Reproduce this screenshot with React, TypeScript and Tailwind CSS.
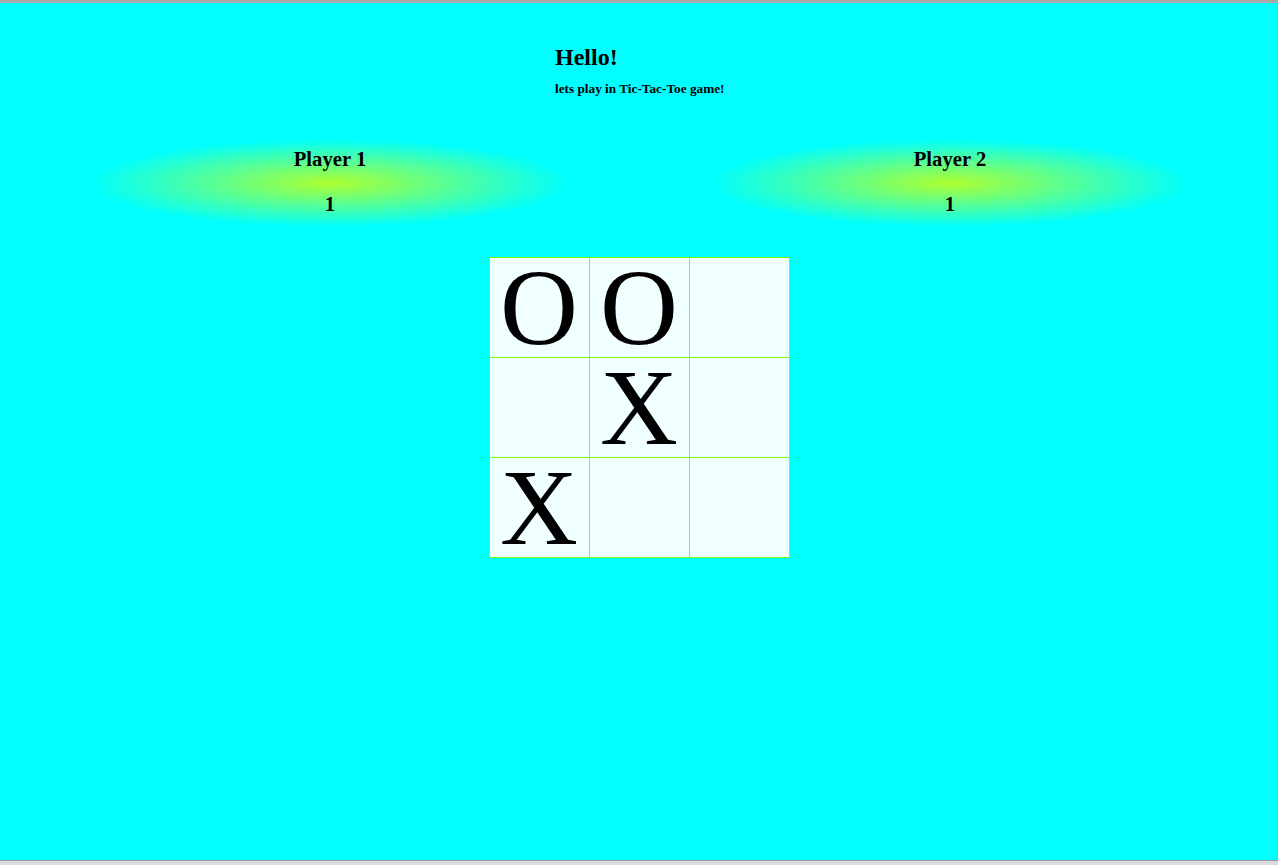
const board = ['O', 'O', '', '', 'X', '', 'X', '', ''];

const players = [
  { name: 'Player 1', score: 1 },
  { name: 'Player 2', score: 1 },
];

export default function App() {
  return (
    <div className="flex h-[865px] flex-col bg-[#dcdcdc] font-['Liberation_Serif',serif] text-black">
      <div className="h-[3px] bg-[#a9a9a9]" />
      <div className="h-[857px] bg-[#00ffff]">
        {/* Header */}
        <div className="ml-[555px] mt-[40px]">
          <h2 className="text-[24px] font-bold leading-[28px]">Hello!</h2>
          <h5 className="mt-[10px] text-[13.28px] font-bold leading-[15px]">lets play in Tic-Tac-Toe game!</h5>
        </div>

        {/* Scores */}
        <div className="mt-[43px] flex justify-between pl-[90px] pr-[88px]">
          {players.map((p) => (
            <div
              key={p.name}
              className="flex h-[88px] w-[480px] flex-col items-center pt-[8px] bg-[radial-gradient(closest-side,#adff2f,#00ffff)]"
            >
              <h3 className="text-[20.7px] font-bold leading-[24px]">{p.name}</h3>
              <h3 className="mt-[21px] text-[20.7px] font-bold leading-[24px]">{p.score}</h3>
            </div>
          ))}
        </div>

        {/* Board */}
        <div className="mt-[30px] flex justify-center">
          <div className="grid grid-cols-3 gap-px bg-[#7fff00] p-px">
            {board.map((v, i) => (
              <div
                key={i}
                className="h-[99px] w-[99px] bg-[#f0ffff] text-center text-[108px] leading-[99px]"
              >
                {v}
              </div>
            ))}
          </div>
        </div>
      </div>
      <div className="h-px bg-[#9a9a9a]" />
    </div>
  );
}
